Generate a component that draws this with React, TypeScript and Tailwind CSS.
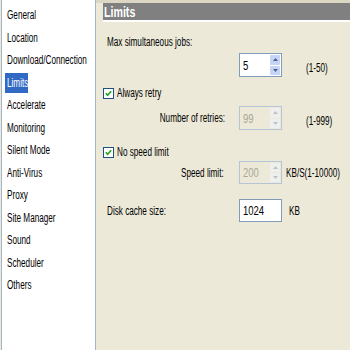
import React from "react";

const font = { fontFamily: '"Liberation Sans", Arial, sans-serif' };

function T({ children, right = false, className = "scale-x-[0.68]" }: { children: React.ReactNode; right?: boolean; className?: string }) {
  return (
    <span className={`inline-block whitespace-nowrap ${right ? "origin-right" : "origin-left"} ${className}`}>
      {children}
    </span>
  );
}

function Spin({ value, disabled = false, arrows = true }: { value: string; disabled?: boolean; arrows?: boolean }) {
  return (
    <div
      className={`relative flex h-full w-[43px] items-center border ${
        disabled ? "border-[#b5c4d6] bg-[#ece9d8] text-[#a8a797]" : "border-[#7f9db9] bg-white text-black"
      }`}
    >
      <span className="pl-[3px] text-[13px] leading-none">
        <T className="scale-x-[0.73]">{value}</T>
      </span>
      {arrows && (
        <div className="absolute right-[1px] top-[1px] bottom-[1px] flex w-[10px] flex-col gap-[1px]">
          {[0, 1].map((i) => (
            <div
              key={i}
              className={`flex flex-1 items-center justify-center rounded-[1px] ${
                disabled ? "bg-[#eef0ef]" : "bg-[#c6d5f7]"
              }`}
            >
              <svg width="5" height="3" viewBox="0 0 5 3">
                <polygon
                  points={i === 0 ? "0,3 5,3 2.5,0" : "0,0 5,0 2.5,3"}
                  fill={disabled ? "#c2c2bc" : "#4d6185"}
                />
              </svg>
            </div>
          ))}
        </div>
      )}
    </div>
  );
}

function Check({ label }: { label: string }) {
  return (
    <div className="flex h-[14px] items-center gap-[3px] pl-[7px]">
      <div className="flex h-[11px] w-[11px] items-center justify-center border border-[#1c5180] bg-white">
        <svg width="7" height="7" viewBox="0 0 7 7">
          <polyline points="0.8,3.2 2.6,5.2 6.2,1.2" fill="none" stroke="#21a121" strokeWidth="1.6" />
        </svg>
      </div>
      <span className="text-[12px] leading-none">
        <T>{label}</T>
      </span>
    </div>
  );
}

export default function App() {
  const items = [
    "General",
    "Location",
    "Download/Connection",
    "Limits",
    "Accelerate",
    "Monitoring",
    "Silent Mode",
    "Anti-Virus",
    "Proxy",
    "Site Manager",
    "Sound",
    "Scheduler",
    "Others",
  ];
  return (
    <div className="flex h-[350px] w-[350px] overflow-hidden bg-[#ece9d8] text-black" style={font}>
      <div className="ml-[1px] h-full w-[95px] shrink-0 border-x border-[#a5b5c9] bg-white pt-[4px]">
        {items.map((it) => (
          <div key={it} className="flex h-[22.5px] items-center pl-[3px]">
            {it === "Limits" ? (
              <span className="flex h-[20px] w-[23px] items-center bg-[#316ac5] pl-[2px] text-[12px] text-white">
                <T>{it}</T>
              </span>
            ) : (
              <span className="pl-[2px] text-[12px] leading-[20px]">
                <T>{it}</T>
              </span>
            )}
          </div>
        ))}
      </div>
      <div className="flex flex-1 flex-col">
        <div className="h-[3px] bg-[#dcd7c2]" />
        <div className="ml-[7px] flex h-[17px] items-center bg-[#808080] pl-[1px]">
          <span className="text-[14px] font-bold leading-none text-white">
            <T className="scale-x-[0.76]">Limits</T>
          </span>
        </div>
        <div className="ml-[7px] h-[2px] bg-white" />
        <div className="mt-[13px] flex h-[14px] items-center pl-[11px] text-[12px] leading-none">
          <T>Max simultaneous jobs:</T>
        </div>
        <div className="mt-[4px] flex h-[24px] items-center pl-[143px]">
          <Spin value="5" />
          <span className="ml-[24px] mt-[6px] text-[12px] leading-none">
            <T>(1-50)</T>
          </span>
        </div>
        <div className="mt-[9px]">
          <Check label="Always retry" />
        </div>
        <div className="mt-[6px] flex h-[24px] items-center">
          <span className="w-[129px] text-right text-[12px] leading-none">
            <T right>Number of retries:</T>
          </span>
          <div className="ml-[14px] h-full">
            <Spin value="99" disabled />
          </div>
          <span className="ml-[24px] mt-[6px] text-[12px] leading-none">
            <T>(1-999)</T>
          </span>
        </div>
        <div className="mt-[15px]">
          <Check label="No speed limit" />
        </div>
        <div className="mt-[2px] flex h-[23px] items-center">
          <span className="w-[128px] text-right text-[12px] leading-none">
            <T right>Speed limit:</T>
          </span>
          <div className="ml-[15px] h-full">
            <Spin value="200" disabled />
          </div>
          <span className="ml-[4px] text-[12px] leading-none">
            <T>KB/S(1-10000)</T>
          </span>
        </div>
        <div className="mt-[15px] flex h-[23px] items-center">
          <span className="w-[143px] pl-[11px] text-[12px] leading-none">
            <T>Disk cache size:</T>
          </span>
          <div className="h-full">
            <Spin value="1024" arrows={false} />
          </div>
          <span className="ml-[7px] text-[12px] leading-none">
            <T>KB</T>
          </span>
        </div>
      </div>
    </div>
  );
}
